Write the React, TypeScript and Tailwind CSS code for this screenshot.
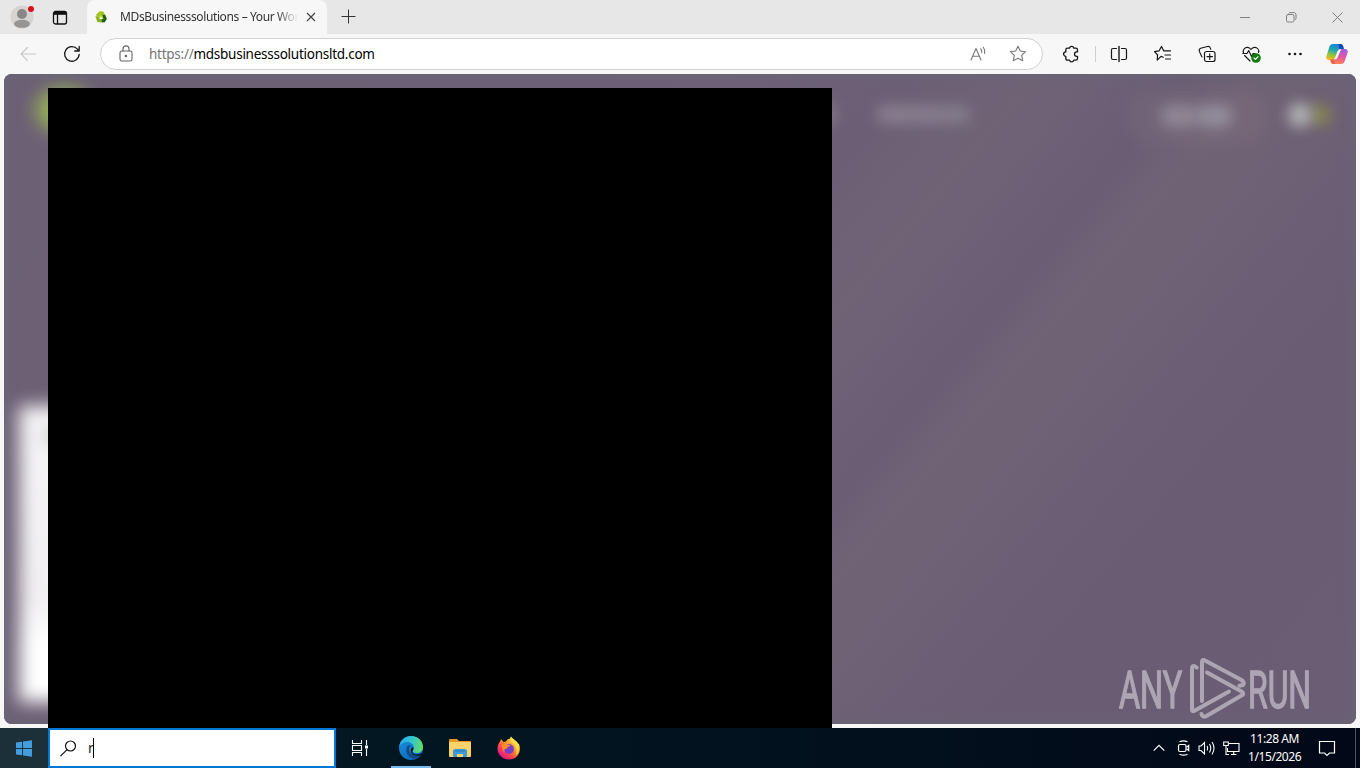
import type { ReactNode } from 'react';

interface IconProps {
  size?: number;
  className?: string;
  children: ReactNode;
}

// 20x20 stroke icon used by the browser chrome
function Icon({ size = 20, className = '', children }: IconProps) {
  return (
    <svg
      width={size}
      height={size}
      viewBox="0 0 20 20"
      fill="none"
      stroke="currentColor"
      strokeWidth={1.1}
      strokeLinecap="round"
      strokeLinejoin="round"
      className={`shrink-0 ${className}`}
    >
      {children}
    </svg>
  );
}

function ToolButton({ children }: { children: ReactNode }) {
  return <button className="flex w-11 h-8 shrink-0 items-center justify-center">{children}</button>;
}

function Avatar() {
  return (
    <div className="relative w-6 h-6 shrink-0">
      <svg width="24" height="24" viewBox="0 0 24 24">
        <circle cx="12" cy="12" r="11.5" fill="#d6d4d2" />
        <circle cx="12" cy="9" r="5" fill="#8a8886" />
        <ellipse cx="12" cy="18.8" rx="8" ry="4" fill="#979593" />
      </svg>
      <span className="absolute left-[18px] top-px w-1.5 h-1.5 rounded-full bg-[#d8101c]" />
    </div>
  );
}

function Favicon() {
  return (
    <svg width="12" height="12" viewBox="0 0 12 12" className="shrink-0">
      <circle cx="6" cy="6.200" r="4.300" fill="#b5cf3a" />
      <path d="M4.500.3 8 .5 10.500 4 7 4.500 5.400 3.300 3.600 5.600.6 4.300z" fill="#a3c51c" />
      <path d="M.4 5 3.600 6 4 8.300 6.500 8.500 6 11.600 2.400 11z" fill="#84b418" />
      <path d="M7.400 3.800 10.300 4 11.800 8 9.800 11.300 6.500 11.500 6.600 8.500 8.500 8z" fill="#245f14" />
      <path d="M6 5.200 7.600 8H4.500z" fill="#fff" />
    </svg>
  );
}

function Copilot() {
  return (
    <svg width="24" height="24" viewBox="0 0 24 24" className="shrink-0">
      <defs>
        <linearGradient id="cpLeft" x1="0.600" y1="0" x2="0.300" y2="1">
          <stop offset="0" stopColor="#1682d8" />
          <stop offset="0.400" stopColor="#20a9b0" />
          <stop offset="0.700" stopColor="#8cc63e" />
          <stop offset="1" stopColor="#f5b81e" />
        </linearGradient>
        <linearGradient id="cpRight" x1="0.700" y1="0" x2="0.300" y2="1">
          <stop offset="0" stopColor="#a45de6" />
          <stop offset="0.500" stopColor="#e5569b" />
          <stop offset="1" stopColor="#fd8b4d" />
        </linearGradient>
      </defs>
      <path d="M8 2h7.500c1.500 0 2.200 1 2.600 2.300l.7 2.700h-2.500c-2 0-3 .8-3.600 2.700l-1.900 5.800c-.5 1.700-1.500 2.500-3.200 2.500H4c-2.200 0-3.200-1.500-2.600-3.800L4.300 5C4.900 3 6 2 8 2z" fill="url(#cpLeft)" />
      <path d="M13.500 2h2c1.500 0 2.200 1 2.600 2.300l.7 2.700h-4.500z" fill="#1546b8" />
      <path d="M16 22H8.500C7 22 6.300 21 5.900 19.700L5.200 17.500h2.500c2 0 3-.8 3.600-2.700l1.900-5.300c.5-1.700 1.500-2.500 3.200-2.500H20c2.200 0 3.200 1.500 2.600 3.800L19.700 19c-.6 2-1.700 3-3.700 3z" fill="url(#cpRight)" />
      <path d="M10.500 22h-2C7 22 6.300 21 5.900 19.700L5.200 17.500h4z" fill="#f35f4a" />
      <path d="M12 10.200Q12.800 7.200 15 7.200h1.200L13 14.500q-.8 2.700-3 2.700H8.500Q9.900 16.500 10.500 14.700z" fill="#f7f7f7" />
    </svg>
  );
}

function TabStrip() {
  return (
    <header className="flex h-[34px] shrink-0 bg-[#e7e7e7]">
      <div className="flex w-[87px] items-center gap-[17px] pl-2.5">
        <Avatar />
        <svg width="17" height="17" viewBox="0 0 17 17" fill="none" stroke="#111" strokeWidth="1.300" className="shrink-0">
          <rect x="2.500" y="2.500" width="13" height="12.500" rx="2" />
          <path d="M3 4.300h12" strokeWidth="3" />
          <path d="M6.500 5v10" />
        </svg>
      </div>

      {/* Active tab */}
      <div className="flex w-60 items-center rounded-t-lg bg-[#f7f7f7] pl-2">
        <Favicon />
        <div className="ml-[13px] w-[178px] overflow-hidden whitespace-nowrap text-[12px] tracking-[-0.38px] text-[#333] mask-r-from-[88%]">
          MDsBusinesssolutions – Your Wor
        </div>
        <svg width="10" height="10" viewBox="0 0 10 10" stroke="#444" strokeWidth="1.200" className="ml-2 shrink-0">
          <path d="M1 1l8 8M9 1l-8 8" />
        </svg>
      </div>
      <svg width="15" height="15" viewBox="0 0 15 15" stroke="#333" strokeWidth="1" className="ml-3.5 mt-[9px] shrink-0">
        <path d="M7.500 .5v14M.5 7.500h14" />
      </svg>

      {/* Window controls */}
      <div className="ml-auto flex text-[#808080]">
        <div className="flex w-[46px] items-center justify-center">
          <svg width="10" height="10" stroke="currentColor"><path d="M0 5.500h10" /></svg>
        </div>
        <div className="flex w-[46px] items-center justify-center">
          <svg width="11" height="11" fill="none" stroke="currentColor">
            <rect x=".5" y="2.500" width="7.500" height="7.500" rx="1.500" />
            <path d="M2.500 1.500 3.500.6H8.500L10 2v4.500L9 8" />
          </svg>
        </div>
        <div className="flex w-[46px] items-center justify-center">
          <svg width="11" height="11" stroke="currentColor"><path d="M.5.5l10 10M10.500.5l-10 10" /></svg>
        </div>
      </div>
    </header>
  );
}

function Toolbar() {
  return (
    <div className="flex h-10 shrink-0 items-center bg-[#f7f7f7] pl-1.5 text-[#161616]">
      <ToolButton>
        <Icon className="text-[#c8c8c8]"><path d="M17.500 10H3M9.500 3.500 3 10l6.500 6.500" /></Icon>
      </ToolButton>
      <ToolButton>
        <Icon><path d="M17.200 10.300A7.300 7.300 0 1 1 15.500 5.200L17 7M17.200 2.500V7h-4.500" strokeWidth={1.3} /></Icon>
      </ToolButton>

      {/* Address bar */}
      <div className="ml-1.5 flex h-8 w-[943px] shrink-0 items-center rounded-full border border-[#d2d2d2] bg-white pl-[15px] pr-3.5">
        <Icon className="text-[#666]">
          <rect x="4" y="7" width="12" height="10" rx="1.800" />
          <path d="M7 7V4.900a3 3 0 0 1 6 0V7" />
          <circle cx="10" cy="12" r="0.700" fill="currentColor" />
        </Icon>
        <div className="ml-[13px] flex-1 whitespace-nowrap text-[13.5px] tracking-[-0.26px] text-black">
          <span className="text-[#757575]">https://</span>mdsbusinesssolutionsltd.com
        </div>
        <Icon className="mr-5 text-[#777]">
          <path d="M3 16 8 4.500 13 16M4.800 12.300h6.400M12.800 4.800q1.200 1.500 1 3.700M15.300 3.200q1.900 2.600 1.400 6.300" />
        </Icon>
        <Icon className="text-[#777]">
          <path d="M10 2.200 12.300 7l5.300.7-3.900 3.700 1 5.300L10 14.200l-4.700 2.500 1-5.300L2.400 7.700 7.700 7z" />
        </Icon>
      </div>

      <div className="ml-1.5 flex items-center">
        <ToolButton>
          <Icon>
            <path d="M6.500 4.200h2a2.200 2.200 0 0 1 4.300 0h2q1.700 0 1.700 1.700v2h-.8a2.200 2.200 0 0 0 0 4.400h.8v2.200q0 1.700-1.700 1.700h-2a2.200 2.200 0 0 1-4.300 0h-2q-1.700 0-1.700-1.700v-2.200a2.200 2.200 0 0 1 0-4.400v-2q0-1.700 1.700-1.700z" strokeWidth={1.3} />
          </Icon>
        </ToolButton>
        <div className="ml-0.5 mr-px h-4 w-px bg-[#d0d0d0]" />
        <ToolButton>
          <Icon>
            <path d="M7.500 4.500H4Q2.500 4.500 2.500 6v8q0 1.500 1.500 1.500h3.500M12.500 4.500H16q1.500 0 1.500 1.500v8q0 1.500-1.500 1.500h-3.500" strokeWidth={1.2} />
            <path d="M10 2.500v15" strokeWidth={1.4} />
          </Icon>
        </ToolButton>
        <ToolButton>
          <Icon>
            <path d="M10.300 13.200 8 12.400 4.200 16.200 4.600 11 1.500 7.700l4.600-.9L8.500 2.500l2.200 4.300h6.800M12 11h5.500M12.500 15h5" strokeWidth={1.2} />
          </Icon>
        </ToolButton>
        <ToolButton>
          <Icon>
            <rect x="7.500" y="7.500" width="10.500" height="10" rx="2" strokeWidth={1.2} />
            <path d="M12.750 9.800v5.600M10 12.600h5.500M5 13 2.400 7.500Q1.600 5.300 3.600 4.300L10.500 2.500Q12.500 2 13.300 4l.5 1.300" strokeWidth={1.1} />
          </Icon>
        </ToolButton>
        <ToolButton>
          <Icon>
            <path d="M2.500 9C1.300 5.500 4 3.200 6.600 3.400 8.300 3.500 9.300 4.500 10 5.500c.7-1 1.700-2 3.400-2.100 2.600-.2 5.200 2.100 4.100 5.100M3.600 11.500 9 17M1.800 9.500H6l1.700-3 2.800 6 1.500-3h2" />
            <circle cx="15" cy="14" r="4.800" fill="#107c10" stroke="none" />
            <path d="M12.900 14l1.500 1.500 2.700-2.800" stroke="#fff" strokeWidth={1.1} />
          </Icon>
        </ToolButton>
        <ToolButton>
          <Icon>
            <g fill="currentColor" stroke="none">
              <circle cx="4.500" cy="10" r="1.300" />
              <circle cx="10" cy="10" r="1.300" />
              <circle cx="15.500" cy="10" r="1.300" />
            </g>
          </Icon>
        </ToolButton>
        <div className="flex w-10 items-center justify-center"><Copilot /></div>
      </div>
    </div>
  );
}

function Watermark() {
  return (
    <svg width="206" height="74" viewBox="0 0 206 74" className="absolute bottom-0 right-[38px] opacity-55">
      <g fill="#e6e0ea" stroke="#e6e0ea" strokeWidth="1.300" fontFamily="Roboto, sans-serif" fontSize="51">
        <text transform="translate(7 58) scale(0.635 1.020)">ANY</text>
        <text transform="translate(136 58) scale(0.625 1.020)">RUN</text>
      </g>
      <g fill="none" stroke="#e6e0ea" strokeWidth="4" strokeLinejoin="round" strokeLinecap="round">
        <path d="M84.700 17.500Q80 14 80 19v40.500q0 2.500 2.500 1.200L117 41.500" />
        <path d="M90 51V12q0-3 3-1.500l36.500 19.500q3.500 2.500 1.500 5l-3.500.7" />
        <path d="M95 22.500 129.500 41.500q3.500 2 0 4L94.500 66q-4 2-5-2" />
      </g>
    </svg>
  );
}

// Page behind the overlay, everything in it is out of focus
function BlurredPage() {
  return (
    <main className="mx-1 h-[650px] shrink-0 overflow-hidden rounded-lg bg-[#6e6075]">
      <div className="relative h-full bg-[linear-gradient(130deg,#6c6075_0%,#6e6076_40%,#6c5f75_48%,#706376_54.5%,#6d6076_59%,#6a5d74_62.5%,#706376_66%,#6f6275_69%,#6c5f75_75%,#6a5d73_82%,#6b5e74_100%)] shadow-[inset_0_0_14px_#676777]">
        <div className="absolute left-8 top-3.5 h-11 w-14 rounded-full bg-[#96b056] blur-[9px]" />
        <div className="absolute left-[805px] top-7 h-6 w-7 rounded-full bg-[#918593]/60 blur-[7px]" />
        <div className="absolute left-[872px] top-[31px] h-[19px] w-[95px] rounded-full bg-linear-to-r from-[#918295] to-[#83818f] opacity-85 blur-[7px]" />
        <div className="absolute left-[1122px] top-4 h-14 w-36 rounded-full bg-[#80707d]/35 blur-[9px]" />
        <div className="absolute left-[1156px] top-[31px] h-[22px] w-[38px] rounded-full bg-[#97909f]/80 blur-[7px]" />
        <div className="absolute left-[1191px] top-[31px] h-[22px] w-[38px] rounded-full bg-[#9997a5]/80 blur-[7px]" />
        <div className="absolute left-[1305px] top-[30px] h-[22px] w-[22px] rounded-full bg-[#89884f]/90 blur-[7px]" />
        <div className="absolute left-[1284px] top-[29px] h-6 w-6 rounded-full bg-[#b2b3b6] blur-[7px]" />
        <div className="absolute left-[15px] top-[332px] h-[296px] w-20 bg-linear-to-b from-[#f5f4f5] via-[#f1eff1] via-65% to-white to-80% blur-[9px]" />
        <div className="absolute left-[38px] top-[352px] h-5 w-8 bg-[#ddd] blur-[6px]" />
        <Watermark />
      </div>
    </main>
  );
}

function EdgeLogo() {
  return (
    <svg width="26" height="26" viewBox="0 0 26 26">
      <defs>
        <linearGradient id="edgeTop" x1="0" y1="0.400" x2="1" y2="0.500">
          <stop offset="0" stopColor="#2aa9e8" />
          <stop offset="0.500" stopColor="#31c5cf" />
          <stop offset="1" stopColor="#68dd62" />
        </linearGradient>
        <linearGradient id="edgeBase" x1="0" y1="0" x2="0.700" y2="1">
          <stop offset="0" stopColor="#1a91df" />
          <stop offset="1" stopColor="#0d69b6" />
        </linearGradient>
      </defs>
      <circle cx="13" cy="13" r="12" fill="url(#edgeBase)" />
      <path d="M1.200 12C2 5.500 7 1 13 1c7.500 0 12 5.500 12 11 0 4-3 6-6.200 6-2.800 0-4.300-1-4.300-2 0-.7 1.300-1.300 1.300-3.500 0-3-2.800-5.500-6.800-5.500C5 7 2 9.500 1.200 12z" fill="url(#edgeTop)" />
      <path d="M10 10.500C7 13 7.500 21 14.500 23.500c4 .8 7.500-1.500 8.500-4-6 2.500-11.500 0-12-4.500-.2-2 .5-3.500 2-4.500z" fill="#124b87" />
      <path d="M14.500 16c-.8 3 2.700 4.500 9 2.500l1.500-1v1l-2 1.700c-5 1.300-9-.2-10-3.200-.4-2 0-3.500 1.500-5 1 .5 1.300 1.500.8 2.500z" fill="#02131d" />
    </svg>
  );
}

function FolderLogo() {
  return (
    <svg width="24" height="20" viewBox="0 0 24 20">
      <path d="M1 2q0-1 1-1h7l2 2h11q1 0 1 1v4H1z" fill="#e59b23" />
      <path d="M1 4h22v14q0 1-1 1H2q-1 0-1-1z" fill="#f9d36a" />
      <path d="M5 19v-6q0-2 2-2h10q2 0 2 2v6h-4v-3H9v3z" fill="#3f9bd8" />
      <path d="M7 13h10" stroke="#2a78b4" strokeWidth="1" />
    </svg>
  );
}

function FirefoxLogo() {
  return (
    <svg width="24" height="24" viewBox="0 0 24 24">
      <defs>
        <linearGradient id="ffBody" x1="0.850" y1="0.100" x2="0.200" y2="0.900">
          <stop offset="0" stopColor="#fff04a" />
          <stop offset="0.400" stopColor="#ff9a2a" />
          <stop offset="0.700" stopColor="#ff4648" />
          <stop offset="1" stopColor="#e31587" />
        </linearGradient>
      </defs>
      <path d="M3 5.500 4 3l2.500 3L9 5.500C10 3.500 11 3 12.500 3L14 .5c1 2.500 6 4 7 7l1 .5c3 8-2 15.500-9.800 15.500C5.500 23.500.5 18.500.5 13 .5 9.500 1.500 7.500 3 5.500z" fill="url(#ffBody)" />
      <circle cx="12" cy="13" r="4.900" fill="#7540c8" />
      <path d="M5 8.500C7 7 9 7 11 8.700l2.500.3c0 1.500-2.500 1.500-3 2.500-.3 1-.8 1.300-2 1.500-1.500.2-1.500 2-.8 3.200C5.500 15 4.800 12 5 8.500z" fill="#ff8b2d" />
      <path d="M14 .5c1 2.500 7 4.500 7.800 10 .5 4-1 7-3.300 9 1.500-4 1.500-8-1-10.500-2-2-4.500-4-3.500-8.500z" fill="#ffe14b" opacity="0.850" />
    </svg>
  );
}

function Taskbar() {
  return (
    <footer className="flex h-10 shrink-0 bg-linear-to-r from-[#021b24] via-[#02131f] via-50% to-[#020817] text-white">
      <div className="flex w-12 items-center justify-center bg-[#1b3038]">
        <svg width="16" height="17" viewBox="0 0 16 17" fill="#419ddd">
          <path d="M0 2.500 6 1.700V8H0zM7 1.500 16 .2V8H7zM0 9h6v6.300L0 14.500zM7 9h9v7.800L7 15.500z" />
        </svg>
      </div>
      <div className="flex w-72 items-center border-2 border-[#0078d7] bg-white pl-2.5 text-black">
        <svg width="17" height="17" viewBox="0 0 17 17" fill="none" stroke="#111" strokeWidth="1.200">
          <circle cx="10.500" cy="6" r="5" />
          <path d="M6.800 9.800 .5 16.200" />
        </svg>
        <span className="ml-[11px] text-[14px] leading-5 tracking-[-0.8px] text-[#222]">r</span>
        <span className="h-5 w-px bg-black" />
      </div>

      {/* Pinned apps */}
      <div className="flex">
        <div className="flex w-12 items-center justify-center">
          <svg width="18" height="16" viewBox="0 0 18 16" fill="none" stroke="#fff" strokeWidth="1.100">
            <path d="M1.500 0v3.500h9V0M1.500 16v-3.500h9V16M1.500 5.500h9v5h-9zM15.500 0v5M15.500 9v7" />
            <path d="M14 7h3" strokeWidth="3" />
          </svg>
        </div>
        <div className="ml-0.5 flex w-[50px] flex-col items-center">
          <div className="flex flex-1 items-center pt-0.5"><EdgeLogo /></div>
          <div className="h-0.5 w-10 bg-[#76b9ed]" />
        </div>
        <div className="flex w-12 items-center justify-center"><FolderLogo /></div>
        <div className="flex w-[50px] items-center justify-center"><FirefoxLogo /></div>
      </div>

      {/* System tray */}
      <div className="ml-auto flex items-center">
        <svg width="12" height="8" viewBox="0 0 12 8" fill="none" stroke="#fff" strokeWidth="1.200" className="mr-3"><path d="M.7 6.700 6 1.400l5.300 5.300" /></svg>
        <svg width="14" height="16" viewBox="0 0 14 16" fill="none" stroke="#fff" strokeWidth="1.200" className="mr-[7px]">
          <rect x="1.500" y="4.500" width="7.500" height="7" rx="1.500" />
          <path d="M9.500 7.200 11.700 5.500v5L9.500 8.800M2.500 1.700q4-1.800 8 0M2.500 14.300q4 1.800 8 0" />
        </svg>
        <svg width="18" height="14" viewBox="0 0 18 14" fill="none" stroke="#fff" strokeWidth="1.100" className="mr-[7px]">
          <path d="M1 5v4.500h2L6.500 13V1.500L3 5zM9 5q1.300 2 0 4.500M11.500 3q2.500 4 0 8.500M14 1q4 6 0 12.500" />
        </svg>
        <svg width="17" height="15" viewBox="0 0 17 15" fill="none" stroke="#fff" strokeWidth="1.100" className="mr-2">
          <path d="M6 2.500h10v8H4.500V7M8 13.500h5.500M10.700 10.500v3M.7 1h4.600v3.500H.7zM3 4.500V13.500h3" />
        </svg>
        <div className="w-[53px] text-center text-[12px] leading-[18px] tracking-[-0.42px] whitespace-nowrap">
          <div>11:28 AM</div>
          <div>1/15/2026</div>
        </div>
        <svg width="18" height="17" viewBox="0 0 18 17" fill="none" stroke="#fff" strokeWidth="1.200" className="ml-[17px]">
          <path d="M1.500 1.500h15v11.500h-5L9 15.500 6.500 13h-5z" />
        </svg>
        <div className="ml-[19px] h-10 w-px bg-[#4a5060]" />
        <div className="w-1" />
      </div>
    </footer>
  );
}

export default function App() {
  return (
    <div className="relative flex h-[768px] w-[1360px] flex-col overflow-hidden bg-[#f7f7f7] font-['Noto_Sans',sans-serif]">
      <TabStrip />
      <Toolbar />
      <BlurredPage />
      <div className="h-1 shrink-0" />
      <Taskbar />
      {/* Start search flyout, not painted yet */}
      <div className="absolute left-12 top-[88px] h-[640px] w-[784px] bg-black" />
    </div>
  );
}
